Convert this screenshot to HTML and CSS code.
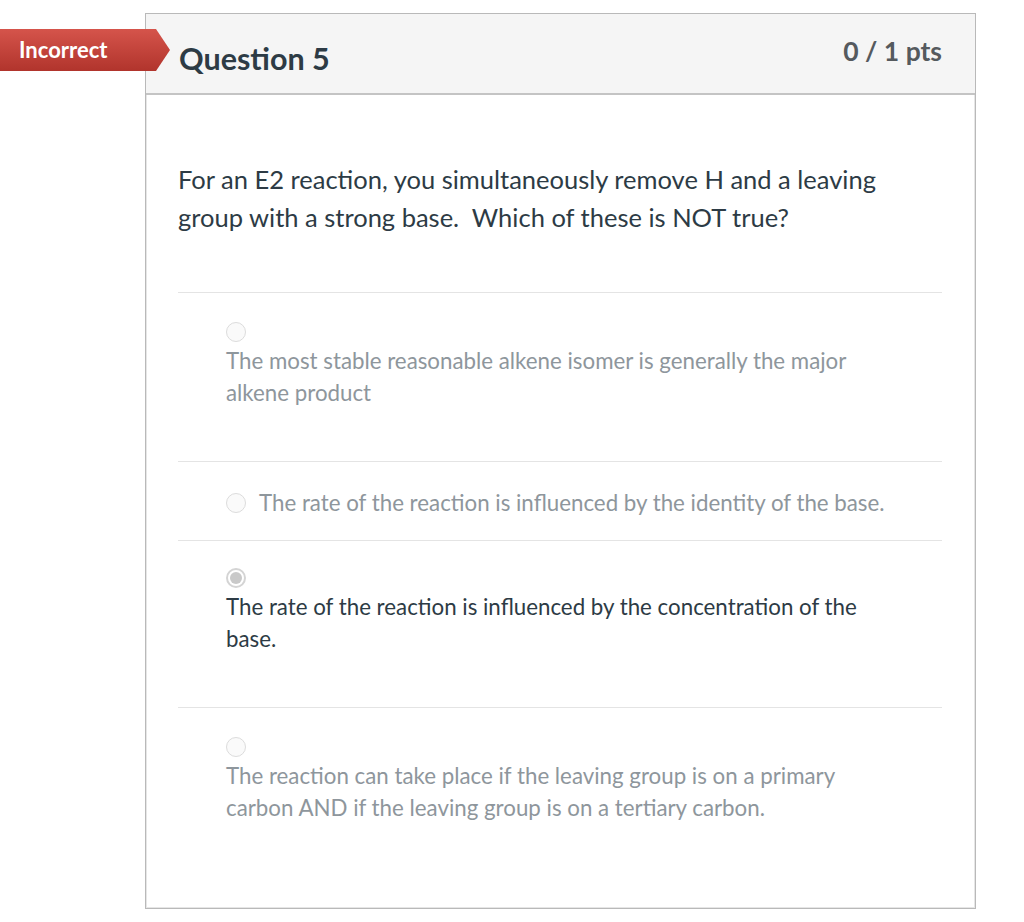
FILE: index.html
```html
<!DOCTYPE html>
<html>
<head>
<meta charset="utf-8">
<link rel="stylesheet" href="styles.css">
</head>
<body>
<div class="page">
  <div class="badge">Incorrect</div>
  <div class="card">
    <div class="card-header">
      <h2 class="title">Question 5</h2>
      <div class="pts">0 / 1 pts</div>
    </div>
    <div class="card-body">
      <p class="question">For an E2 reaction, you simultaneously remove H and a leaving group with a strong base.&nbsp; Which of these is NOT true?</p>
      <div class="answers">
        <div class="answer stacked">
          <span class="radio"></span>
          <div class="label">The most stable reasonable alkene isomer is generally the major alkene product</div>
        </div>
        <div class="answer inline">
          <span class="radio"></span>
          <div class="label">The rate of the reaction is influenced by the identity of the base.</div>
        </div>
        <div class="answer stacked selected">
          <span class="radio checked"></span>
          <div class="label">The rate of the reaction is influenced by the concentration of the base.</div>
        </div>
        <div class="answer stacked last">
          <span class="radio"></span>
          <div class="label">The reaction can take place if the leaving group is on a primary carbon AND if the leaving group is on a tertiary carbon.</div>
        </div>
      </div>
    </div>
  </div>
</div>
</body>
</html>
```
FILE: styles.css
```css
html, body {
  margin: 0;
  padding: 0;
  background: #ffffff;
}
body {
  font-family: Lato, "Open Sans", "Liberation Sans", sans-serif;
  color: #2d3b45;
}
.page {
  position: relative;
  padding: 13px 0 0 145px;
}
.badge {
  position: absolute;
  left: 0;
  top: 29px;
  width: 170px;
  height: 42px;
  box-sizing: border-box;
  padding-left: 19px;
  line-height: 42px;
  font-size: 22px;
  font-weight: 700;
  color: #ffffff;
  background: linear-gradient(#d5544b, #b1342c);
  clip-path: polygon(0 0, 156px 0, 170px 21px, 156px 42px, 0 42px);
  z-index: 2;
}
.card {
  width: 831px;
  height: 896px;
  box-sizing: border-box;
  border: 1px solid #b9b9b9;
  box-shadow: inset 0 0 0 1px #e6e6e6;
  background: #ffffff;
}
.card-header {
  display: flex;
  justify-content: space-between;
  align-items: flex-start;
  height: 79px;
  background: #f5f5f5;
  border-bottom: 2px solid #c4c4c4;
  padding: 0 33px 0 33px;
}
.title {
  margin: 27px 0 0 0;
  font-size: 30.5px;
  font-weight: 700;
  line-height: 34px;
  color: #2d3b45;
}
.pts {
  margin-top: 22px;
  font-size: 26.5px;
  font-weight: 700;
  line-height: 30px;
  color: #555a5e;
}
.card-body {
  padding: 0 33px 0 32px;
}
.question {
  margin: 65px 0 56px 0;
  max-width: 740px;
  font-size: 25.5px;
  line-height: 38px;
  color: #2d3b45;
}
.answer {
  border-top: 1px solid #e4e4e4;
  padding-left: 48px;
  font-size: 22.3px;
  line-height: 32px;
  color: #8e969c;
}
.answer.stacked {
  padding-top: 29px;
  padding-bottom: 52px;
}
.answer.stacked .radio {
  display: block;
  margin-bottom: 3px;
}
.answer.stacked .label {
  max-width: 650px;
}
.answer.selected.stacked {
  padding-top: 27px;
}
.answer.inline {
  display: flex;
  align-items: center;
  gap: 13px;
  padding-top: 25px;
  padding-bottom: 21px;
}
.answer.selected {
  color: #2d3b45;
}
.radio {
  width: 18px;
  height: 18px;
  border: 1px solid #dcdcdc;
  border-radius: 50%;
  background: #fafafa;
  flex: none;
  box-sizing: content-box;
  position: relative;
}
.radio.checked {
  border: 2px solid #d4d4d4;
  width: 16px;
  height: 16px;
  background: #ffffff;
}
.radio.checked::after {
  content: "";
  position: absolute;
  left: 2px;
  top: 2px;
  width: 12px;
  height: 12px;
  border-radius: 50%;
  background: #c9c9c9;
}
```
